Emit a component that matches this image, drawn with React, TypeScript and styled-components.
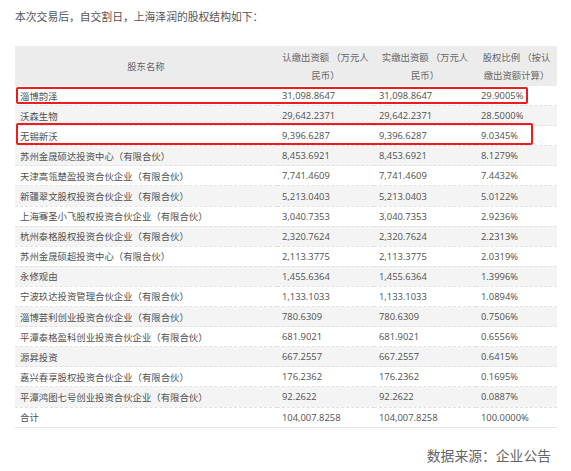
import React from "react";
import styled, { createGlobalStyle } from "styled-components";

const Global = createGlobalStyle`
  html, body { margin: 0; padding: 0; background: #fff; }
  body { font-family: "Noto Sans", "Noto Sans CJK SC", sans-serif; }
`;

const Page = styled.div`
  width: 571px;
  height: 471px;
  padding: 0 0 0 15px;
  box-sizing: border-box;
  position: relative;
  overflow: hidden;
`;

const Intro = styled.p`
  margin: 0;
  padding-top: 8px;
  height: 46px;
  box-sizing: border-box;
  font-family: "Noto Sans CJK SC", sans-serif;
  font-size: 10.8px;
  line-height: 16px;
  color: #555;
`;

const TableWrap = styled.div`
  position: relative;
  width: 542px;
`;

const Table = styled.table`
  width: 542px;
  border-collapse: collapse;
  table-layout: fixed;
  font-family: "Noto Sans", "Noto Sans CJK SC", sans-serif;
  font-size: 9.4px;
  color: #505050;
`;

const HeadCell = styled.th`
  background: #ececec;
  font-weight: normal;
  color: #666;
  text-align: center;
  vertical-align: middle;
  height: 40px;
  padding: 0 4px;
  line-height: 18px;
  font-family: "Noto Sans CJK SC", sans-serif;
`;

const Row = styled.tr<{ $shade: boolean }>`
  background: ${(p) => (p.$shade ? "#f4f4f4" : "#fff")};
  border-bottom: 1px dashed #e2e2e2;
  &:last-child { border-bottom: 1px solid #e4e4e4; }
`;

const Cell = styled.td<{ $cjk?: boolean }>`
  height: 19.1px;
  padding: 0 0 0 5px;
  white-space: nowrap;
  vertical-align: middle;
  font-family: ${(p) => (p.$cjk ? '"Noto Sans CJK SC", sans-serif' : '"Open Sans", "Noto Sans", sans-serif')};
`;

const Highlight = styled.div<{ $top: number; $width: number; $height: number }>`
  position: absolute;
  left: 1px;
  top: ${(p) => p.$top}px;
  width: ${(p) => p.$width}px;
  height: ${(p) => p.$height}px;
  border: 2px solid #ee1c1c;
  border-radius: 2px;
  box-sizing: border-box;
  pointer-events: none;
`;

const Source = styled.div`
  position: absolute;
  right: 20px;
  bottom: 6px;
  font-family: "Noto Sans CJK SC", sans-serif;
  font-size: 13.8px;
  color: #666;
`;

const rows: [string, string, string, string][] = [
  ["淄博韵泽", "31,098.8647", "31,098.8647", "29.9005%"],
  ["沃森生物", "29,642.2371", "29,642.2371", "28.5000%"],
  ["无锡新沃", "9,396.6287", "9,396.6287", "9.0345%"],
  ["苏州金晟硕达投资中心（有限合伙）", "8,453.6921", "8,453.6921", "8.1279%"],
  ["天津高瓴楚盈投资合伙企业（有限合伙）", "7,741.4609", "7,741.4609", "7.4432%"],
  ["新疆翠文股权投资合伙企业（有限合伙）", "5,213.0403", "5,213.0403", "5.0122%"],
  ["上海骞圣小飞股权投资合伙企业（有限合伙）", "3,040.7353", "3,040.7353", "2.9236%"],
  ["杭州泰格股权投资合伙企业（有限合伙）", "2,320.7624", "2,320.7624", "2.2313%"],
  ["苏州金晟硕超投资中心（有限合伙）", "2,113.3775", "2,113.3775", "2.0319%"],
  ["永修观由", "1,455.6364", "1,455.6364", "1.3996%"],
  ["宁波玖达投资管理合伙企业（有限合伙）", "1,133.1033", "1,133.1033", "1.0894%"],
  ["淄博芸利创业投资合伙企业（有限合伙）", "780.6309", "780.6309", "0.7506%"],
  ["平潭泰格盈科创业投资合伙企业（有限合伙）", "681.9021", "681.9021", "0.6556%"],
  ["源昇投资", "667.2557", "667.2557", "0.6415%"],
  ["嘉兴春享股权投资合伙企业（有限合伙）", "176.2362", "176.2362", "0.1695%"],
  ["平潭鸿图七号创业投资合伙企业（有限合伙）", "92.2622", "92.2622", "0.0887%"],
  ["合计", "104,007.8258", "104,007.8258", "100.0000%"],
];

export default function App() {
  return (
    <Page>
      <Global />
      <Intro>本次交易后，自交割日，上海泽润的股权结构如下：</Intro>
      <TableWrap>
        <Table>
          <colgroup>
            <col style={{ width: 262 }} />
            <col style={{ width: 97 }} />
            <col style={{ width: 102 }} />
            <col style={{ width: 81 }} />
          </colgroup>
          <thead>
            <tr>
              <HeadCell>股东名称</HeadCell>
              <HeadCell>认缴出资额 （万元人民币）</HeadCell>
              <HeadCell>实缴出资额 （万元人民币）</HeadCell>
              <HeadCell>股权比例 （按认缴出资额计算）</HeadCell>
            </tr>
          </thead>
          <tbody>
            {rows.map((r, i) => (
              <Row key={r[0]} $shade={i % 2 === 1}>
                <Cell $cjk>{r[0]}</Cell>
                <Cell>{r[1]}</Cell>
                <Cell>{r[2]}</Cell>
                <Cell>{r[3]}</Cell>
              </Row>
            ))}
          </tbody>
        </Table>
        <Highlight $top={41} $width={512} $height={17} />
        <Highlight $top={77} $width={517} $height={22} />
      </TableWrap>
      <Source>数据来源：企业公告</Source>
    </Page>
  );
}
